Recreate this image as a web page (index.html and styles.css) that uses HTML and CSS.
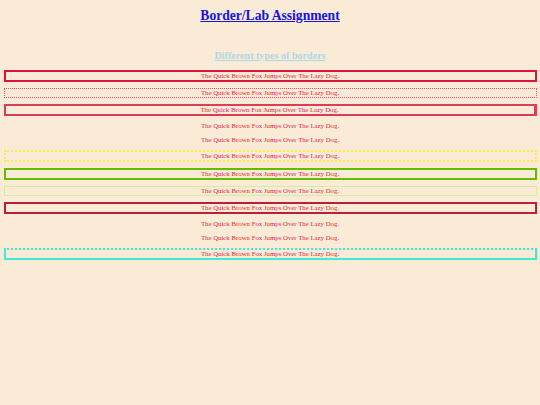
FILE: index.html
```html
<!DOCTYPE html>
<html>
<head>
<meta charset="utf-8">
<title>Border/Lab Assignment</title>
<link rel="stylesheet" href="styles.css">
</head>
<body>
<h1 class="title">Border/Lab Assignment</h1>
<h3 class="subtitle">Different types of borders</h3>
<p class="line b1">The Quick Brown Fox Jumps Over The Lazy Dog.</p>
<p class="line b2">The Quick Brown Fox Jumps Over The Lazy Dog.</p>
<p class="line b3">The Quick Brown Fox Jumps Over The Lazy Dog.</p>
<p class="line b4">The Quick Brown Fox Jumps Over The Lazy Dog.</p>
<p class="line b5">The Quick Brown Fox Jumps Over The Lazy Dog.</p>
<p class="line b6">The Quick Brown Fox Jumps Over The Lazy Dog.</p>
<p class="line b7">The Quick Brown Fox Jumps Over The Lazy Dog.</p>
<p class="line b8">The Quick Brown Fox Jumps Over The Lazy Dog.</p>
<p class="line b9">The Quick Brown Fox Jumps Over The Lazy Dog.</p>
<p class="line b10">The Quick Brown Fox Jumps Over The Lazy Dog.</p>
<p class="line b11">The Quick Brown Fox Jumps Over The Lazy Dog.</p>
<p class="line b12">The Quick Brown Fox Jumps Over The Lazy Dog.</p>
</body>
</html>
```
FILE: styles.css
```css
html {
  background: #faebd7;
}
body {
  margin: 0 3.5px;
  font-family: "Liberation Serif", "Times New Roman", serif;
  background: #faebd7;
}
.title {
  margin: 8px 0 0;
  font-size: 13.6px;
  line-height: 16px;
  text-align: center;
  color: #1414e6;
  text-decoration: underline;
  font-weight: bold;
}
.subtitle {
  margin: 26px 0 9px;
  font-size: 10.1px;
  line-height: 11px;
  text-align: center;
  color: #add8e6;
  text-decoration: underline;
  font-weight: bold;
}
.line {
  margin: 6px 0;
  font-size: 6.8px;
  line-height: 8px;
  text-align: center;
  color: #dc2a4c;
}
.b1 { border: 2px solid #dc143c; }
.b2 { border: 1px dotted #d0607a; }
.b3 { border: 2px solid #dc3c5c; border-right-width: 3px; }
.b4 { border: none; }
.b5 { border: none; }
.b6 { border: 2px dotted #ffe94a; }
.b7 { border: 2px solid #66bb00; }
.b8 { border: 1px solid #d6eba0; }
.b9 { border: 2px solid #b8203c; }
.b10 { border: none; }
.b11 { border: none; }
.b12 { border: 2px solid #40e8d8; border-top-style: dotted; }
```
